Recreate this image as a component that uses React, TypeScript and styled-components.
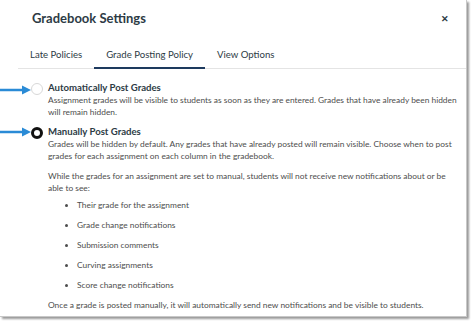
import styled, { createGlobalStyle } from "styled-components";

const GlobalStyle = createGlobalStyle`
  body {
    margin: 0;
    background: #ffffff;
    font-family: Lato, "Open Sans", sans-serif;
    color: #2d3b45;
  }
`;

const Page = styled.div`
  position: relative;
  width: 474px;
  height: 325px;
  overflow: hidden;
`;

const Dialog = styled.div`
  box-sizing: border-box;
  width: 467px;
  height: 317px;
  background: #fff;
  border-right: 1px solid #c8c8c8;
  border-bottom: 1px solid #c8c8c8;
  box-shadow: 2px 2px 2px rgba(0, 0, 0, 0.4);
  display: flex;
  flex-direction: column;
  & > * {
    flex: none;
  }
`;

const Header = styled.div`
  height: 36px;
  display: flex;
  align-items: center;
  justify-content: space-between;
  padding: 0 17px 0 32px;
`;

const Title = styled.h1`
  margin: 0;
  font-size: 13px;
  line-height: 16px;
  font-weight: 700;
  color: #2d3b45;
`;

const Close = styled.span`
  font-size: 9px;
  font-weight: 700;
  color: #2d3b45;
`;

const Tabs = styled.div`
  display: flex;
  margin: 8px 0 0 18px;
  border-bottom: 1px solid #e4e4e4;
`;

const Tab = styled.div<{ $active?: boolean }>`
  padding: 5px 12px 6px;
  font-size: 9.6px;
  line-height: 12px;
  color: #2d3b45;
  border-bottom: 2px solid ${(p) => (p.$active ? "#1d3a5e" : "transparent")};
  margin-bottom: -1px;
`;

const Body = styled.div`
  padding: 12px 6px 0 31px;
  display: flex;
  flex-direction: column;
`;

const Option = styled.div`
  display: flex;
  gap: 5px;
  margin-bottom: 7px;
`;

const Radio = styled.span<{ $checked?: boolean }>`
  box-sizing: border-box;
  flex: none;
  width: 12px;
  height: 12px;
  margin-top: 2px;
  border-radius: 50%;
  border: ${(p) => (p.$checked ? "3px solid #111" : "1px solid #d8d8d8")};
  background: #fff;
`;

const OptionText = styled.div`
  display: flex;
  flex-direction: column;
`;

const OptionTitle = styled.div`
  font-size: 9.6px;
  font-weight: 700;
  line-height: 13px;
  color: #2d3b45;
`;

const Text = styled.p`
  margin: 0;
  font-size: 8.4px;
  line-height: 12px;
  color: #4d4d4d;
`;

const Para = styled(Text)<{ $gap: number }>`
  margin-top: ${(p) => p.$gap}px;
`;

const List = styled.ul`
  margin: 5px 0 0;
  padding: 0 0 0 29px;
  display: flex;
  flex-direction: column;
  gap: 8px;
  font-size: 8.4px;
  line-height: 12px;
  color: #4d4d4d;
  li::marker {
    font-size: 8px;
  }
`;

const Arrow = styled.svg<{ $top: number }>`
  position: absolute;
  left: 0;
  top: ${(p) => p.$top}px;
`;

const BlueArrow = ({ top }: { top: number }) => (
  <Arrow $top={top} width="32" height="10" viewBox="0 0 32 10">
    <line x1="0" y1="5" x2="24" y2="5" stroke="#2a8bd6" strokeWidth="2.5" />
    <polygon points="22,0.5 31,5 22,9.5" fill="#2a8bd6" />
  </Arrow>
);

const bullets = [
  "Their grade for the assignment",
  "Grade change notifications",
  "Submission comments",
  "Curving assignments",
  "Score change notifications",
];

export default function App() {
  return (
    <Page>
      <GlobalStyle />
      <Dialog>
        <Header>
          <Title>Gradebook Settings</Title>
          <Close>✕</Close>
        </Header>
        <Tabs>
          <Tab>Late Policies</Tab>
          <Tab $active>Grade Posting Policy</Tab>
          <Tab>View Options</Tab>
        </Tabs>
        <Body>
          <Option>
            <Radio />
            <OptionText>
              <OptionTitle>Automatically Post Grades</OptionTitle>
              <Text>
                Assignment grades will be visible to students as soon as they are
                entered. Grades that have already been hidden will remain hidden.
              </Text>
            </OptionText>
          </Option>
          <Option>
            <Radio $checked />
            <OptionText>
              <OptionTitle>Manually Post Grades</OptionTitle>
              <Text>
                Grades will be hidden by default. Any grades that have already
                posted will remain visible. Choose when to post grades for each
                assignment on each column in the gradebook.
              </Text>
              <Para $gap={8}>
                While the grades for an assignment are set to manual, students
                will not receive new notifications about or be able to see:
              </Para>
              <List>
                {bullets.map((b) => (
                  <li key={b}>{b}</li>
                ))}
              </List>
              <Para $gap={8}>
                Once a grade is posted manually, it will automatically send new
                notifications and be visible to students.
              </Para>
            </OptionText>
          </Option>
        </Body>
      </Dialog>
      <BlueArrow top={85} />
      <BlueArrow top={127} />
    </Page>
  );
}
